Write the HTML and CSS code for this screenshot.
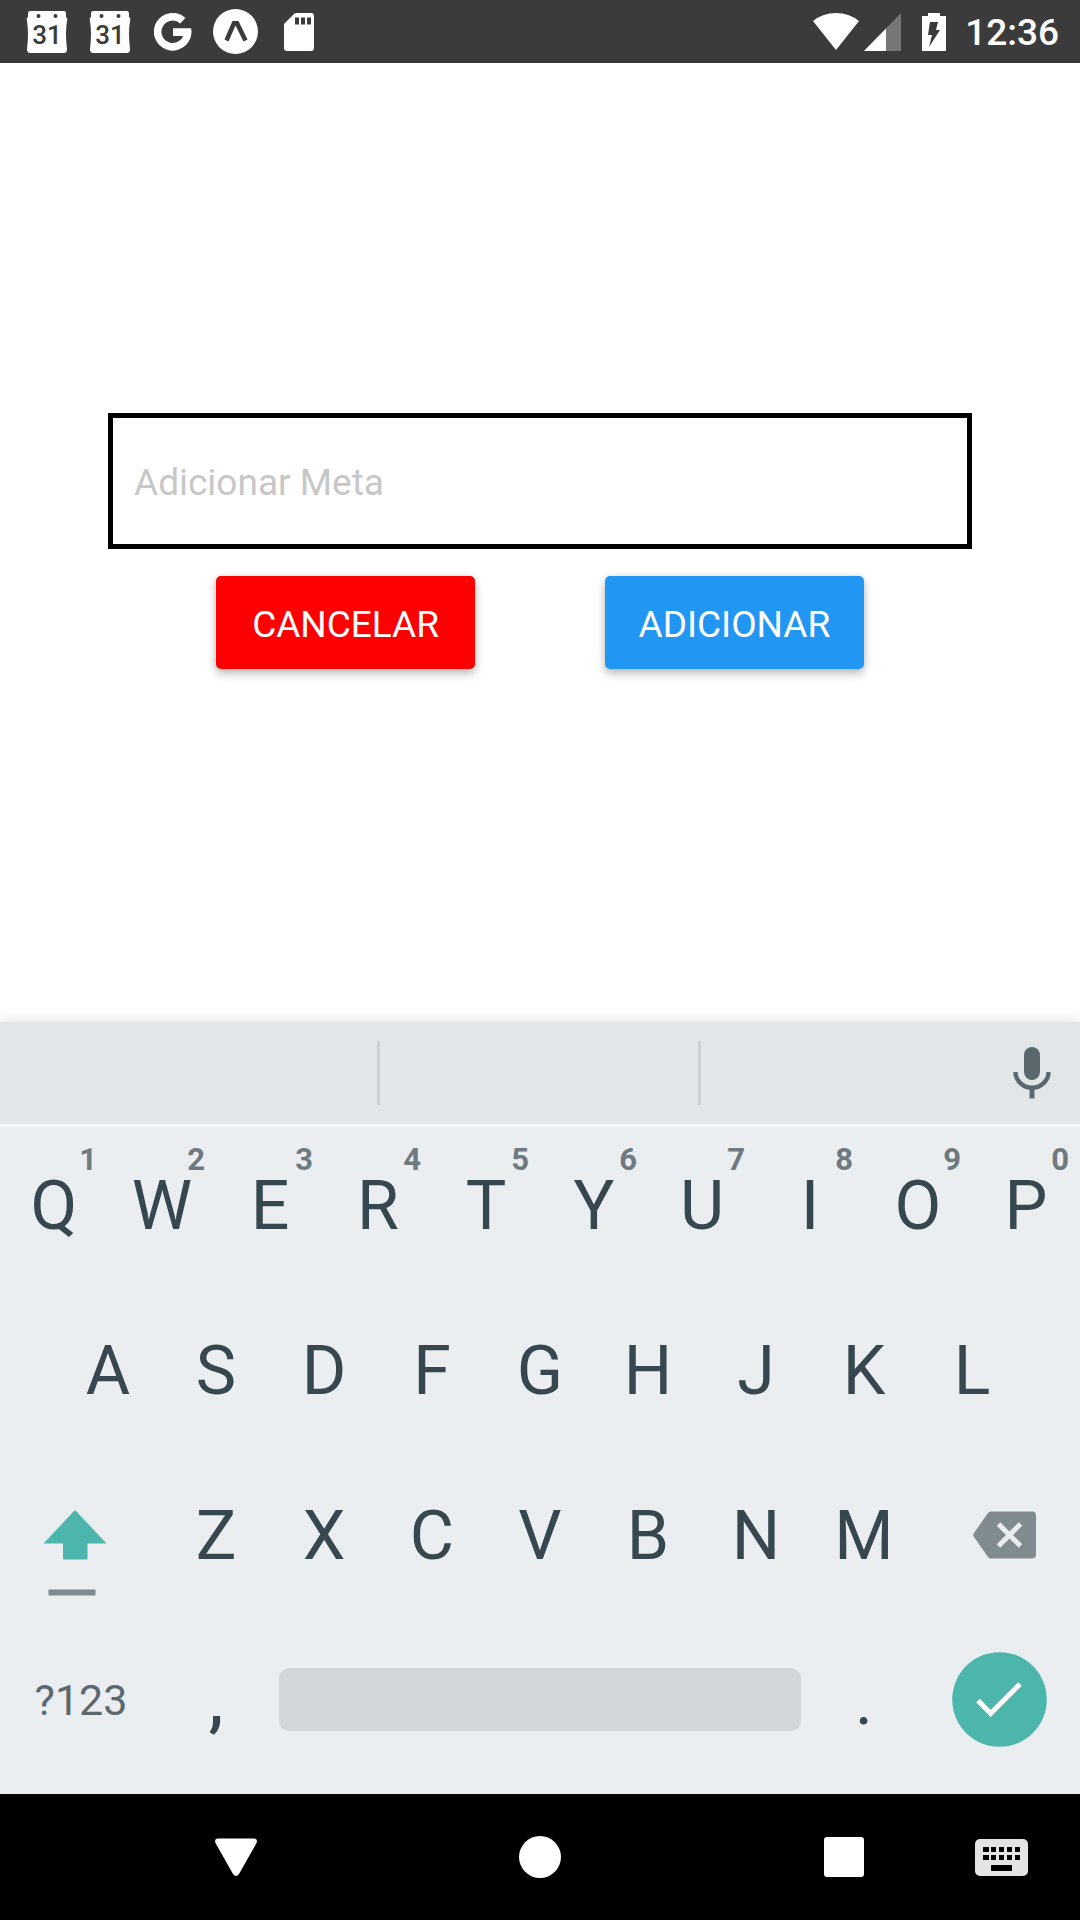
FILE: index.html
```html
<!DOCTYPE html>
<html lang="pt-BR">
<head>
<meta charset="utf-8">
<meta name="viewport" content="width=device-width, initial-scale=1">
<title>Adicionar Meta</title>
<link rel="stylesheet" href="styles.css">
</head>
<body>
<header class="status">
  <div class="status-left">
    <span class="slot"><svg width="42" height="42" viewBox="0 0 42 42"><path fill="#fff" d="M4 0H38Q40 0 40 3V6Q42 7 41 10Q39 22 41 38Q41 42 38 42H4Q1 42 1 38Q3 22 1 10Q0 7 2 6V3Q2 0 4 0Z"/><circle cx="12.500" cy="5" r="2" fill="#3b3b3b"/><circle cx="29.500" cy="5" r="2" fill="#3b3b3b"/><text class="cal-day" x="21" y="33" text-anchor="middle">31</text></svg></span>
    <span class="slot"><svg width="42" height="42" viewBox="0 0 42 42"><path fill="#fff" d="M4 0H38Q40 0 40 3V6Q42 7 41 10Q39 22 41 38Q41 42 38 42H4Q1 42 1 38Q3 22 1 10Q0 7 2 6V3Q2 0 4 0Z"/><circle cx="12.500" cy="5" r="2" fill="#3b3b3b"/><circle cx="29.500" cy="5" r="2" fill="#3b3b3b"/><text class="cal-day" x="21" y="33" text-anchor="middle">31</text></svg></span>
    <span class="slot"><svg width="38" height="38" viewBox="0 0 38 38"><path fill="none" stroke="#fff" stroke-width="7.600" d="M28.800 7.700A15 15 0 1 0 33.600 20"/><path fill="#fff" d="M19 15.300H37.200Q38 19 36.800 23H19Z"/></svg></span>
    <span class="slot"><svg width="45" height="45" viewBox="0 0 45 45"><circle cx="22.500" cy="22.500" r="22.500" fill="#fff"/><path fill="#3b3b3b" d="M19.500 12H25.500L34.500 30.500L30.500 32.500L22.500 16.500L15.500 32.500L11.500 30.500Z"/></svg></span>
    <span class="slot"><svg width="32" height="38" viewBox="0 0 32 38"><path fill="#fff" d="M12 0H28Q31 0 31 3V35Q31 38 28 38H4Q1 38 1 35V11Z"/><path fill="#3b3b3b" d="M12 4.500h4v7h-4zM18 4.500h4v7h-4zM24 4.500h4v7h-4z"/></svg></span>
  </div>
  <div class="status-right">
    <svg width="46" height="38" viewBox="0 0 46 38"><path fill="#fff" d="M0 8Q10 0 23 0T46 8L23 37Z"/></svg>
    <svg class="signal" width="37" height="38" viewBox="0 0 37 38"><path fill="#777" d="M37 0V38H0Z"/><path fill="#fff" d="M22 15.400V38H0Z"/></svg>
    <svg class="battery" width="24" height="38" viewBox="0 0 24 38"><path fill="#fff" d="M6 0H18V3H24V38H0V3H6Z"/><path fill="#3b3b3b" d="M8 9H16L14 17H18L7 34L10 22H6Z"/></svg>
    <time class="clock">12:36</time>
  </div>
</header>

<main class="goal">
  <form class="goal-form">
    <input class="goal-input" type="text" placeholder="Adicionar Meta" aria-label="Adicionar Meta">
    <div class="goal-actions">
      <button class="btn btn-cancel" type="button">CANCELAR</button>
      <button class="btn btn-add" type="button">ADICIONAR</button>
    </div>
  </form>
</main>

<section class="keyboard" aria-label="Teclado">
  <div class="suggestions">
    <div></div>
    <div class="divided"></div>
    <div class="divided voice">
      <button class="mic" type="button" aria-label="Voz"><svg width="38" height="52" viewBox="0 0 38 52"><rect x="11" y="0" width="16" height="33" rx="8" fill="#5b696f"/><path fill="none" stroke="#5b696f" stroke-width="4.400" d="M2.500 25A16.500 15.800 0 0 0 35.500 25"/><path fill="#5b696f" d="M16.500 40h5v11.500h-5z"/></svg></button>
    </div>
  </div>
  <div class="keys">
    <div class="row">
      <button class="key" type="button">Q<span class="hint">1</span></button>
      <button class="key" type="button">W<span class="hint">2</span></button>
      <button class="key" type="button">E<span class="hint">3</span></button>
      <button class="key" type="button">R<span class="hint">4</span></button>
      <button class="key" type="button">T<span class="hint">5</span></button>
      <button class="key" type="button">Y<span class="hint">6</span></button>
      <button class="key" type="button">U<span class="hint">7</span></button>
      <button class="key" type="button">I<span class="hint">8</span></button>
      <button class="key" type="button">O<span class="hint">9</span></button>
      <button class="key" type="button">P<span class="hint">0</span></button>
    </div>
    <div class="row row-inset">
      <button class="key" type="button">A</button>
      <button class="key" type="button">S</button>
      <button class="key" type="button">D</button>
      <button class="key" type="button">F</button>
      <button class="key" type="button">G</button>
      <button class="key" type="button">H</button>
      <button class="key" type="button">J</button>
      <button class="key" type="button">K</button>
      <button class="key" type="button">L</button>
    </div>
    <div class="row">
      <button class="key key-wide key-shift" type="button" aria-label="Shift"><svg width="64" height="134" viewBox="0 0 64 134"><path fill="#4db6ac" d="M32 42L63.500 75.500H44.500V91.500H20V75.500H0.500Z"/><path fill="#808b91" d="M5.500 121.500h47v6h-47z"/></svg></button>
      <button class="key" type="button">Z</button>
      <button class="key" type="button">X</button>
      <button class="key" type="button">C</button>
      <button class="key" type="button">V</button>
      <button class="key" type="button">B</button>
      <button class="key" type="button">N</button>
      <button class="key" type="button">M</button>
      <button class="key key-wide key-delete" type="button" aria-label="Apagar"><svg width="63" height="48" viewBox="0 0 63 48"><path fill="#808b8f" d="M18 0.500H59Q63 0.500 63 4.500V43.500Q63 47.500 59 47.500H18Q16 47.500 15 46L1 26Q-0.500 24 1 22L15 2Q16 0.500 18 0.500Z"/><path stroke="#eaeef1" stroke-width="5" d="M25.500 13L47.500 35M47.500 13L25.500 35"/></svg></button>
    </div>
    <div class="row">
      <button class="key key-wide key-symbols" type="button">?123</button>
      <button class="key key-comma" type="button">,</button>
      <button class="key key-space" type="button" aria-label="Espaço"><span class="space-bar"></span></button>
      <button class="key" type="button">.</button>
      <button class="key key-wide" type="button" aria-label="Concluir"><svg width="95" height="95" viewBox="0 0 95 95"><circle cx="47.500" cy="47.500" r="47.300" fill="#4db6ac"/><path fill="none" stroke="#fff" stroke-width="5" d="M26 48.500L38.700 61.500L68 32"/></svg></button>
    </div>
  </div>
</section>

<nav class="system-nav" aria-label="Sistema">
  <div></div>
  <button class="nav-btn" type="button" aria-label="Voltar"><svg width="42" height="42" viewBox="0 0 42 42"><path fill="#fff" d="M3 2.500H39Q43 3 41.500 7L24 38Q21 42 18 38L0.500 7Q-1 3 3 2.500Z"/></svg></button>
  <button class="nav-btn" type="button" aria-label="Início"><svg width="42" height="42" viewBox="0 0 42 42"><circle cx="21" cy="21" r="21" fill="#fff"/></svg></button>
  <button class="nav-btn" type="button" aria-label="Recentes"><svg width="40" height="40" viewBox="0 0 40 40"><rect width="40" height="40" rx="3" fill="#fff"/></svg></button>
  <button class="nav-btn nav-ime" type="button" aria-label="Trocar teclado"><svg width="53" height="37" viewBox="0 0 53 37"><rect width="53" height="37" rx="5" fill="#e4e4e4"/><path d="M8 8h6v5H8zM16 8h5v5h-5zM24 8h5v5h-5zM32 8h5v5h-5zM40 8h5v5h-5zM8 16h6v5H8zM16 16h5v5h-5zM24 16h5v5h-5zM32 16h5v5h-5zM40 16h5v5h-5zM16 26h21v6H16z"/></svg></button>
</nav>
</body>
</html>
```
FILE: styles.css
```css
*, *::before, *::after { box-sizing: border-box; }

body {
  margin: 0;
  min-height: 100vh;
  display: flex;
  flex-direction: column;
  background: #fff;
  font-family: Roboto, "Liberation Sans", sans-serif;
}

button {
  margin: 0;
  padding: 0;
  border: 0;
  background: none;
  font: inherit;
  color: inherit;
}

svg { display: block; flex: none; }

/* Status bar */
.status {
  height: 63px;
  padding: 0 21px 0 15px;
  display: flex;
  align-items: center;
  justify-content: space-between;
  background: #3b3b3b;
  color: #fff;
}

.status-left, .status-right { display: flex; align-items: center; }
.slot { width: 63px; display: flex; justify-content: center; }
.cal-day { font-size: 26px; font-weight: 500; fill: #3b3b3b; }
.signal { margin-left: 5px; }
.battery { margin-left: 21px; }
.clock { margin-left: 19px; padding-top: 2px; font-size: 37px; font-weight: 500; line-height: 42px; }

/* Goal form */
.goal {
  flex: 1;
  display: flex;
  flex-direction: column;
  align-items: center;
  justify-content: center;
  padding-bottom: 3px;
}

.goal-form {
  width: 80%;
  display: flex;
  flex-direction: column;
  align-items: center;
  gap: 27px;
}

.goal-input {
  width: 100%;
  height: 136px;
  padding: 2px 21px 0;
  border: 5px solid #000;
  border-radius: 0;
  background: #fff;
  font: inherit;
  font-size: 37px;
  outline: 0;
}

.goal-input::placeholder { color: #c7c7c7; opacity: 1; }

.goal-actions {
  width: 75%;
  display: flex;
  justify-content: space-between;
}

.btn {
  width: 40%;
  padding: 27px 0 23px;
  border-radius: 5px;
  color: #fff;
  font-size: 37px;
  line-height: 43px;
  box-shadow: 0 5px 10px rgba(0, 0, 0, 0.24), 0 0 6px rgba(0, 0, 0, 0.1);
}

.btn-cancel { background: #f00; }
.btn-add { background: #2196f3; }

/* Keyboard */
.keyboard {
  background: #eaeef1;
  color: #37474f;
  box-shadow: 0 -3px 12px rgba(0, 0, 0, 0.1);
}

.suggestions {
  height: 105px;
  display: grid;
  grid-template-columns: 377fr 321fr 382fr;
  align-items: center;
  background: #e2e6e9;
  border-bottom: 3px solid #f6f8f9;
}

.divided {
  height: 64px;
  border-left: 3px solid #cbd0d3;
}

.voice {
  display: flex;
  align-items: center;
  justify-content: flex-end;
  padding-right: 29px;
}

.keys {
  display: flex;
  flex-direction: column;
  gap: 10px;
  padding-bottom: 17px;
}

.row { display: flex; height: 155px; }
.row-inset { padding: 0 5%; }

.key {
  position: relative;
  flex: 1 1 0;
  min-width: 0;
  display: flex;
  align-items: center;
  justify-content: center;
  padding-top: 2px;
  font-size: 68px;
}

.hint {
  position: absolute;
  top: 17px;
  right: 11px;
  color: #6e7a80;
  font-size: 31px;
  font-weight: 700;
  line-height: 32px;
}

.key-wide { flex: 0 0 15%; padding-top: 0; }
.key-shift { padding-right: 12px; }
.key-delete { padding-left: 11px; }
.key-symbols { color: #5b696f; font-size: 43px; }
.key-comma { font-weight: 500; }
.key-space { flex: 0 0 50%; padding: 0 9px; }
.space-bar { flex: 1; height: 63px; border-radius: 10px; background: #d1d6d9; }

/* System navigation */
.system-nav {
  height: 126px;
  display: grid;
  grid-template-columns: 144fr 184fr 424fr 184fr 131fr 13fr;
  align-items: center;
  background: #000;
}

.nav-btn { display: flex; justify-content: center; }
```
